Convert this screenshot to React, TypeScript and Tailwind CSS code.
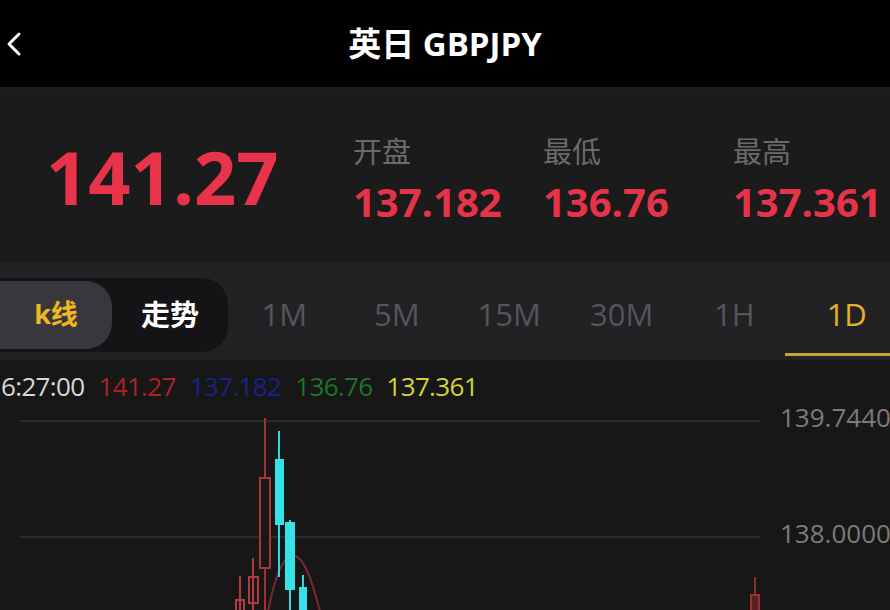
import { ChevronLeft } from 'lucide-react';

const tabs = ['1M', '5M', '15M', '30M', '1H', '1D'];

const stats = [
  { label: '开盘', value: '137.182' },
  { label: '最低', value: '136.76' },
  { label: '最高', value: '137.361' },
];

function Candles() {
  return (
    <svg width="770" height="210" viewBox="0 0 770 210" className="block shrink-0">
      <line x1="20" y1="21" x2="760" y2="21" stroke="#2c2c2c" strokeWidth="2" />
      <line x1="20" y1="137" x2="760" y2="137" stroke="#2c2c2c" strokeWidth="2" />
      {/* moving average */}
      <path d="M268 212 Q280 150 296 156 Q308 162 320 212" fill="none" stroke="#7a2a2e" strokeWidth="2" />
      {/* rising candles */}
      <line x1="240" y1="176" x2="240" y2="210" stroke="#b03a40" strokeWidth="2" />
      <rect x="236" y="200" width="8" height="14" fill="none" stroke="#b03a40" strokeWidth="2" />
      <line x1="253" y1="158" x2="253" y2="210" stroke="#b03a40" strokeWidth="2" />
      <rect x="249" y="177" width="9" height="26" fill="none" stroke="#b03a40" strokeWidth="2" />
      <line x1="265" y1="18" x2="265" y2="212" stroke="#9c3338" strokeWidth="2" />
      <rect x="260" y="78" width="10" height="90" fill="#171717" stroke="#a8363c" strokeWidth="2" />
      {/* falling candles */}
      <line x1="279" y1="31" x2="279" y2="177" stroke="#33d8de" strokeWidth="2" />
      <rect x="275" y="59" width="9" height="66" fill="#34e2e8" />
      <line x1="290" y1="120" x2="290" y2="212" stroke="#33d8de" strokeWidth="2" />
      <rect x="285" y="122" width="10" height="68" fill="#34e2e8" />
      <line x1="303" y1="175" x2="303" y2="212" stroke="#33d8de" strokeWidth="2" />
      <rect x="299" y="187" width="8" height="26" fill="#34e2e8" />
      {/* right edge */}
      <line x1="755" y1="177" x2="755" y2="212" stroke="#8a2c30" strokeWidth="2" />
      <rect x="751" y="195" width="8" height="18" fill="#5a1f22" stroke="#9a3034" strokeWidth="2" />
    </svg>
  );
}

export default function App() {
  return (
    <div className="w-[890px] h-[610px] overflow-hidden bg-[#171717] font-['Open_Sans','Noto_Sans_CJK_SC',sans-serif]">
      <header className="h-[89px] bg-black grid grid-cols-[1fr_auto_1fr] items-center border-b-2 border-[#1f1f1f]">
        <div className="flex items-center">
          <ChevronLeft size={40} strokeWidth={1.75} className="text-white -ml-[6px]" />
        </div>
        <h1 className="text-white text-[33px] font-bold leading-none">英日 GBPJPY</h1>
        <div />
      </header>

      <section className="h-[174px] bg-[#1b1b1b] flex items-center overflow-hidden">
        <div className="w-[353px] shrink-0 pl-[46px] pt-[2px]">
          <span className="text-[#e8334a] text-[74px] font-bold leading-none">141.27</span>
        </div>
        {stats.map((s) => (
          <div key={s.label} className="w-[190px] shrink-0 flex flex-col gap-[12px] pt-[8px]">
            <span className="text-[#6a6a6a] text-[29px] leading-[32px]">{s.label}</span>
            <span className="text-[#e5344a] text-[40px] font-bold leading-[44px]">{s.value}</span>
          </div>
        ))}
      </section>

      <nav className="h-[97px] bg-[#222225] flex items-center pt-[6px] overflow-hidden">
        <div className="w-[228px] h-[74px] bg-[#141416] rounded-r-[26px] flex items-center shrink-0">
          <div className="w-[112px] h-[68px] bg-[#38383c] rounded-r-[26px] flex items-center justify-center">
            <span className="text-[#efb91d] text-[27px] font-bold">k线</span>
          </div>
          <div className="flex-1 flex items-center justify-center">
            <span className="text-white text-[29px] font-bold">走势</span>
          </div>
        </div>
        {tabs.map((t) => {
          const active = t === '1D';
          return (
            <div key={t} className="w-[112.5px] shrink-0 h-full flex flex-col items-center justify-center relative">
              <span className={active ? 'text-[#e2b02a] text-[31px]' : 'text-[#55555a] text-[31px]'}>{t}</span>
              {active && <div className="absolute bottom-[4px] left-[-6px] w-[106px] h-[3px] bg-[#c9a238]" />}
            </div>
          );
        })}
      </nav>

      <section className="bg-[#171717]">
        <div className="h-[40px] flex items-start pt-[8px] gap-[14px] pl-[1px] text-[26px] leading-[36px] tracking-tight overflow-visible">
          <span className="text-[#d8d8d8]">6:27:00</span>
          <span className="text-[#a8222b]">141.27</span>
          <span className="text-[#1a2286]">137.182</span>
          <span className="text-[#1e7428]">136.76</span>
          <span className="text-[#d3d33a]">137.361</span>
        </div>
        <div className="flex">
          <Candles />
          <div className="flex flex-col pl-[10px] text-[#7b7b7b] text-[26px] leading-[30px] whitespace-nowrap">
            <span className="mt-[2px]">139.7440</span>
            <span className="mt-[86px]">138.0000</span>
          </div>
        </div>
      </section>
    </div>
  );
}
